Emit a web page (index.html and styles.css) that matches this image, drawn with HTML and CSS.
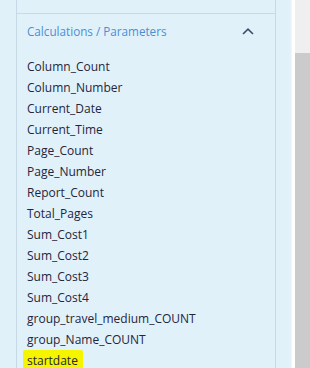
FILE: index.html
```html
<!DOCTYPE html>
<html>
<head>
<meta charset="utf-8">
<link rel="stylesheet" href="styles.css">
</head>
<body>
<div class="layout">
  <div class="panel">
    <div class="card">
      <div class="prev-section"></div>
      <div class="section">
        <div class="section-head">
          <span class="section-title">Calculations / Parameters</span>
          <svg class="chevron" width="12" height="7" viewBox="0 0 12 7"><path d="M1 6 L6 1.2 L11 6" fill="none" stroke="#3d4f66" stroke-width="1.6"/></svg>
        </div>
        <ul class="items">
          <li>Column_Count</li>
          <li>Column_Number</li>
          <li>Current_Date</li>
          <li>Current_Time</li>
          <li>Page_Count</li>
          <li>Page_Number</li>
          <li>Report_Count</li>
          <li>Total_Pages</li>
          <li>Sum_Cost1</li>
          <li>Sum_Cost2</li>
          <li>Sum_Cost3</li>
          <li>Sum_Cost4</li>
          <li>group_travel_medium_COUNT</li>
          <li>group_Name_COUNT</li>
          <li><span class="highlight">startdate</span></li>
        </ul>
      </div>
    </div>
  </div>
  <div class="gutter"></div>
  <div class="side">
    <div class="side-top"></div>
    <div class="side-bottom"></div>
  </div>
</div>
</body>
</html>
```

FILE: styles.css
```css
html, body {
  margin: 0;
  padding: 0;
  height: 368px;
  overflow: hidden;
  background: #ffffff;
  font-family: "Open Sans", "DejaVu Sans", sans-serif;
}
.layout {
  display: flex;
  height: 368px;
}
.panel {
  width: 292px;
  background: #e1f1fa;
  padding-left: 16px;
  box-sizing: border-box;
  box-shadow: inset -2px 0 2px -1px #f1f8fc;
}
.card {
  width: 260px;
  height: 368px;
  border-left: 1px solid #c7d9e5;
  border-right: 1px solid #c7d9e5;
  box-sizing: border-box;
}
.prev-section {
  height: 13px;
}
.section {
  border-top: 1px solid #c9dae5;
}
.section-head {
  display: flex;
  align-items: center;
  justify-content: space-between;
  padding: 4px 21px 0 10px;
  height: 26px;
}
.section-title {
  color: #4a8fd6;
  font-size: 11.7px;
}
.chevron {
  display: block;
}
.items {
  list-style: none;
  margin: 0;
  padding: 12px 0 0 10px;
}
.items li {
  height: 21px;
  line-height: 21px;
  font-size: 12px;
  color: #25253a;
}
.highlight {
  background: #f5f500;
  padding: 2px 5px 3px 4px;
  margin-left: -4px;
  border-radius: 2px;
}
.gutter {
  width: 3px;
  background: #ffffff;
}
.side {
  flex: 1;
  display: flex;
  flex-direction: column;
}
.side-top {
  height: 53px;
  background: #efefef;
}
.side-bottom {
  flex: 1;
  background: #cbcbcb;
}
```
